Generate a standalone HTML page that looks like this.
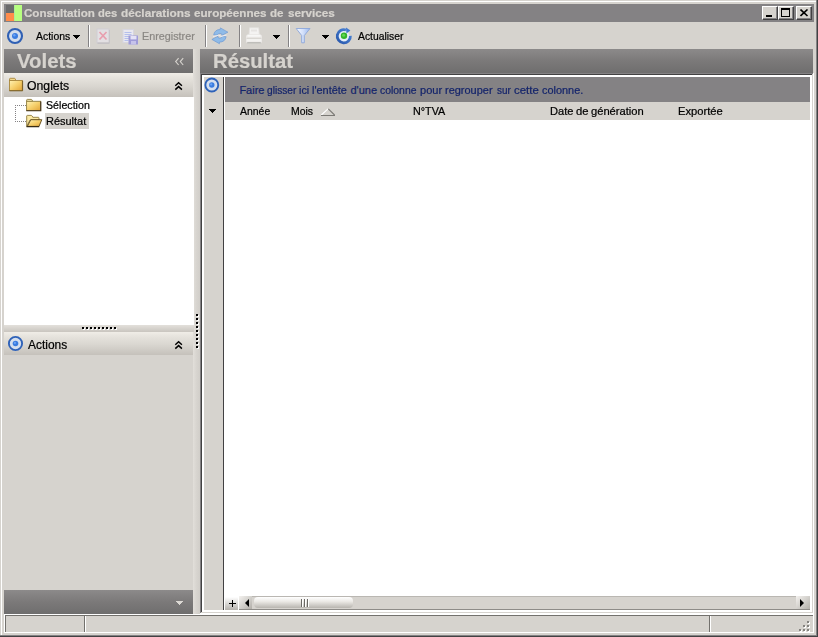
<!DOCTYPE html>
<html>
<head>
<meta charset="utf-8">
<title>Consultation des déclarations européennes de services</title>
<style>
html,body{margin:0;padding:0;}
body{width:818px;height:637px;overflow:hidden;background:#d6d3ce;font-family:"Liberation Sans",sans-serif;font-size:11px;color:#000;position:relative;}
.a{position:absolute;}
.t{position:absolute;white-space:nowrap;line-height:1;transform-origin:0 0;-webkit-text-stroke:0.22px currentColor;}
#win{left:0;top:0;width:818px;height:637px;background:#d6d3ce;}
/* window frame */
#fr1{left:0;top:0;width:817px;height:636px;border-right:1px solid #424142;border-bottom:1px solid #424142;}
#fr2{left:0;top:0;width:816px;height:635px;border-right:1px solid #848284;border-bottom:1px solid #848284;}
#fr3{left:1;top:1px;left:1px;width:814px;height:633px;border-left:1px solid #fff;border-top:1px solid #fff;}
#title{left:4px;top:4px;width:810px;height:18px;background:#848284;}
.cb{position:absolute;top:6px;width:16px;height:14px;background:#d6d3ce;box-sizing:border-box;border:1px solid;border-color:#fff #424142 #424142 #fff;}
.cb i{position:absolute;left:0;top:0;width:13px;height:11px;border-right:1px solid #848284;border-bottom:1px solid #848284;}
.sep{position:absolute;top:25px;width:1px;height:22px;background:#848284;border-right:1px solid #fff;}
.hdr{background:linear-gradient(#8c8a8a 0%,#7b7979 50%,#6f6e6e 100%);}
.grp{background:linear-gradient(#f0ede7 0%,#e6e3dd 20%,#d9d6d0 55%,#c5c1bb 100%);}
.tri{position:absolute;width:7px;height:4px;--c:#000;background:linear-gradient(var(--c),var(--c)) 0 0/7px 1px no-repeat,linear-gradient(var(--c),var(--c)) 1px 1px/5px 1px no-repeat,linear-gradient(var(--c),var(--c)) 2px 2px/3px 1px no-repeat,linear-gradient(var(--c),var(--c)) 3px 3px/1px 1px no-repeat;}
</style>
</head>
<body>
<div id="win" class="a">
  <div id="fr1" class="a"></div><div id="fr2" class="a"></div><div id="fr3" class="a"></div>

  <!-- title bar -->
  <div id="title" class="a"></div>
  <div class="a" style="left:6px;top:5px;width:8px;height:8px;background:#6b6b6b"></div>
  <div class="a" style="left:6px;top:13px;width:8px;height:8px;background:#ff8c4a"></div>
  <div class="a" style="left:14px;top:5px;width:8px;height:16px;background:linear-gradient(90deg,#a8e8a0 0,#b8ff80 1.5px)"></div>
    <div class="t" id="ttl" style="left:23.57px;top:8px;transform:scaleX(1.053);font-weight:bold;color:#d6d3ce;">Consultation</div><div class="t" style="left:97.69px;top:8px;transform:scaleX(1.0167);font-weight:bold;color:#d6d3ce;">des</div><div class="t" style="left:120.56px;top:8px;transform:scaleX(1.0734);font-weight:bold;color:#d6d3ce;">déclarations</div><div class="t" style="left:193.97px;top:8px;transform:scaleX(1.0593);font-weight:bold;color:#d6d3ce;">européennes</div><div class="t" style="left:270.48px;top:8px;transform:scaleX(1.05);font-weight:bold;color:#d6d3ce;">de</div><div class="t" style="left:287.77px;top:8px;transform:scaleX(1.0636);font-weight:bold;color:#d6d3ce;">services</div>
  <div class="cb" style="left:762px"><i></i><b class="a" style="left:3px;top:8px;width:6px;height:2px;background:#000"></b></div>
  <div class="cb" style="left:778px"><i></i><b class="a" style="left:2px;top:1px;width:7px;height:6px;border:1px solid #000;border-top-width:2px"></b></div>
  <div class="cb" style="left:796px"><i></i>
    <svg class="a" style="left:3px;top:2px" width="9" height="8" viewBox="0 0 9 8"><path d="M0.5 0.5 L7.5 7 M7.5 0.5 L0.5 7" stroke="#000" stroke-width="1.6" fill="none"/></svg>
  </div>

  <!-- toolbar -->
  <svg class="a" style="left:6px;top:27px" width="18" height="18" viewBox="0 0 18 18">
    <circle cx="9" cy="9" r="7.3" fill="#d3ddec"/>
    <circle cx="9" cy="9" r="7.0" fill="none" stroke="#2f60b4" stroke-width="2.1"/>
    <circle cx="9" cy="9" r="3" fill="#3a7ce0"/>
    <circle cx="8.3" cy="8.3" r="1.2" fill="#6aa3f5"/>
  </svg>
  <div class="t" id="tact" style="transform:scaleX(0.948);left:36px;top:31px;">Actions</div>
  <div class="tri" style="left:73px;top:35px;"></div>
  <div class="sep" style="left:88px"></div>
  <!-- delete icon (disabled) -->
  <svg class="a" style="left:95px;top:27px;filter:blur(0.35px)" width="17" height="18" viewBox="0 0 17 18">
    <rect x="2" y="2" width="12" height="14" fill="#e3e0e3" stroke="#d0ced3" stroke-width="1"/>
    <rect x="2.5" y="15.5" width="12" height="1.2" fill="#bfbdc0"/>
    <rect x="14" y="3" width="1" height="13" fill="#c8c6c9"/>
    <path d="M4.5 5 L11.5 12.5 M11.5 5 L4.5 12.5" stroke="#e89eae" stroke-width="1.7" fill="none"/>
  </svg>
  <!-- save icon (disabled) -->
  <svg class="a" style="left:122px;top:28px;filter:blur(0.3px)" width="17" height="17" viewBox="0 0 17 17">
    <rect x="1" y="1.5" width="10.5" height="13" fill="#e9e8ef" stroke="#d6d5e0"/>
    <path d="M2.5 4.5h7M2.5 6.5h7M2.5 8.5h7M2.5 10.5h5M2.5 12.5h4" stroke="#b4bfec" stroke-width="1"/>
    <rect x="6.5" y="7.5" width="9.5" height="9" fill="#9f9bd8"/>
    <rect x="8.5" y="8" width="6" height="3.4" fill="#e4e2f6"/>
    <rect x="9" y="13" width="5" height="3.5" fill="#c6c3ea"/>
  </svg>
  <div class="t" id="tenr" style="transform:scaleX(0.98);left:141.6px;top:31px;color:#8a8783;">Enregistrer</div>
  <div class="sep" style="left:205px"></div>
  <!-- refresh arrows (disabled) -->
  <svg class="a" style="left:211px;top:27px;filter:blur(0.3px)" width="18" height="18" viewBox="0 0 18 18">
    <g id="rfa"><path d="M2.7 7.9 C3.2 4.4 5.8 2.4 9.2 2.5 L9.4 0.9 L16.9 5.2 L10.9 8.3 L10.4 6.6 C8.3 6.2 6.9 6.8 6.2 8.1 Z" fill="#8fbbe8" stroke="#6f99d2" stroke-width="0.7"/></g>
    <use href="#rfa" transform="rotate(180 8.9 8.8)"/>
    <path d="M2.2 9.6 L7.6 8.2 L10.2 9.4 L15.6 8" stroke="#e9ecf4" stroke-width="1.0" fill="none"/>
  </svg>
  <div class="sep" style="left:239px"></div>
  <!-- printer (disabled) -->
  <svg class="a" style="left:245px;top:27px;filter:blur(0.3px)" width="18" height="18" viewBox="0 0 18 18">
    <path d="M4.5 0.8 L13.8 0.8 L14.3 8 L4 8 Z" fill="#f4f3f2" stroke="#e2e0dd" stroke-width="0.8"/>
    <rect x="6" y="2.5" width="6" height="2" fill="#e6e4e2"/>
    <path d="M1 10 Q1 7.2 3.5 7.2 L14.5 7.2 Q17 7.2 17 10 L17 14.5 Q17 16.3 15 16.3 L3 16.3 Q1 16.3 1 14.5 Z" fill="#ebe9e7"/>
    <rect x="2.5" y="8.2" width="13" height="1.4" fill="#fbfaf9"/>
    <rect x="1.5" y="10.8" width="15" height="1.2" fill="#d9d7d3"/>
    <rect x="2" y="12" width="14" height="2.5" fill="#f3f2f0"/>
    <rect x="2.2" y="15.2" width="13.6" height="1.2" fill="#b5b3af"/>
  </svg>
  <div class="tri" style="left:273px;top:35px;"></div>
  <div class="sep" style="left:288px"></div>
  <!-- funnel -->
  <svg class="a" style="left:295px;top:27px;filter:blur(0.25px)" width="17" height="18" viewBox="0 0 17 18">
    <defs><linearGradient id="fg" x1="0" x2="1" y1="0" y2="0"><stop offset="0" stop-color="#f7f9ff"/><stop offset="0.5" stop-color="#d3e0fa"/><stop offset="1" stop-color="#9cb9ee"/></linearGradient></defs>
    <path d="M1.2 1.5 L15 1.5 L9.3 8.5 L9.3 15.8 L6.7 15.8 L6.7 8.5 Z" fill="url(#fg)" stroke="#8ba6da" stroke-width="0.9"/>
  </svg>
  <div class="tri" style="left:322px;top:35px;"></div>
  <!-- actualiser icon -->
  <svg class="a" style="left:335px;top:27px;filter:blur(0.3px)" width="18" height="18" viewBox="0 0 18 18">
    <defs><linearGradient id="ag" x1="0" x2="1" y1="1" y2="0"><stop offset="0" stop-color="#2a58ac"/><stop offset="1" stop-color="#4a84d8"/></linearGradient></defs>
    <circle cx="8.8" cy="9.2" r="5.6" fill="#e4eef9"/>
    <path d="M11.0 3.0 A6.6 6.6 0 1 0 15.4 8.8" fill="none" stroke="url(#ag)" stroke-width="2.8"/>
    <path d="M11 0.6 L15.4 3.4 L11.4 6.4 Z" fill="#3f78cf"/>
    <circle cx="9" cy="8.8" r="3.2" fill="#33b52a"/>
    <circle cx="8.6" cy="8.2" r="1.5" fill="#62d654"/>
  </svg>
  <div class="t" id="tactu" style="transform:scaleX(0.94);left:358px;top:31px;">Actualiser</div>

  <!-- left panel -->
  <div class="a" style="left:193px;top:49px;width:7px;height:565px;background:linear-gradient(90deg,#e2dfda,#d8d5d0 45%,#d1cec9);"></div>
  <div class="a hdr" style="left:4px;top:49px;width:189px;height:24px;"></div>
  <div class="t" id="tvol" style="transform:scaleX(1.04);left:17px;top:52px;font-weight:bold;font-size:19.6px;color:#d6d3ce;">Volets</div>
  <svg class="a" style="left:174px;top:57px" width="11" height="9" viewBox="0 0 11 9"><path d="M4.6 1.2 L1.7 4.6 L4.6 8 M9.2 1.2 L6.3 4.6 L9.2 8" stroke="#d6d3ce" stroke-width="1.15" fill="none"/></svg>

  <div class="a grp" style="left:4px;top:73px;width:189px;height:24px;"></div>
  <!-- folder icon onglets -->
  <svg class="a" style="left:9px;top:77px" width="15" height="15" viewBox="0 0 15 15">
    <defs><linearGradient id="fo" x1="0" x2="1" y1="0" y2="1"><stop offset="0" stop-color="#fff2b4"/><stop offset="0.5" stop-color="#f6d06c"/><stop offset="1" stop-color="#e2a336"/></linearGradient></defs>
    <path d="M0.6 3.6 L0.6 2 Q0.6 1.3 1.3 1.3 L5.4 1.3 Q6 1.3 6.3 2 L6.8 3.6 Z" fill="#f3d98c" stroke="#a8873c" stroke-width="0.9"/>
    <rect x="0.5" y="3.5" width="12.8" height="10" fill="url(#fo)" stroke="#a8873c" stroke-width="0.9"/>
    <path d="M0.4 13.8 H13.6 V3.8" stroke="#7a5e26" stroke-width="1" fill="none"/>
  </svg>
  <div class="t" id="tong" style="transform:scaleX(1.02);left:27px;top:80px;font-size:12px;">Onglets</div>
  <svg class="a chev" style="left:174px;top:81px" width="9" height="10" viewBox="0 0 9 10"><path d="M1.3 4.8 L4.6 1.8 L7.9 4.8 M1.3 8.6 L4.6 5.6 L7.9 8.6" stroke="#000" stroke-width="1.45" fill="none"/></svg>

  <div class="a" style="left:4px;top:97px;width:190px;height:228px;background:#fff;"></div>
  <!-- tree lines -->
  <div class="a" style="left:15px;top:105px;width:1px;height:17px;background:repeating-linear-gradient(#848284 0 1px,#fff 1px 2px);"></div>
  <div class="a" style="left:15px;top:105px;width:11px;height:1px;background:repeating-linear-gradient(90deg,#848284 0 1px,#fff 1px 2px);"></div>
  <div class="a" style="left:15px;top:121px;width:11px;height:1px;background:repeating-linear-gradient(90deg,#848284 0 1px,#fff 1px 2px);"></div>
  <!-- folder closed -->
  <svg class="a" style="left:26px;top:98px" width="16" height="14" viewBox="0 0 16 14">
    <path d="M0.7 3.4 L0.7 2 Q0.7 1.4 1.4 1.4 L5.2 1.4 Q5.8 1.4 6.1 2 L6.6 3.4 Z" fill="#fff4c4" stroke="#8f7c3c" stroke-width="0.9"/>
    <rect x="0.6" y="3.3" width="14" height="9.2" fill="url(#fo)" stroke="#8f7c3c" stroke-width="0.9"/>
    <path d="M0.3 12.7 H14.8 V3.6" stroke="#43331a" stroke-width="1.1" fill="none"/>
  </svg>
  <div class="t" id="tsel" style="transform:scaleX(0.968);left:46px;top:100px;">Sélection</div>
  <!-- selected -->
  <div class="a" style="left:45px;top:113px;width:44px;height:16px;background:#d6d3ce;"></div>
  <svg class="a" style="left:26px;top:114px" width="17" height="14" viewBox="0 0 17 14">
    <path d="M0.7 12.4 L0.7 2 Q0.7 1.4 1.4 1.4 L5 1.4 Q5.8 1.4 6.2 2 L6.8 3.3 L12.3 3.3 Q13 3.3 13 4 L13 6 L4 6 Z" fill="#fbe9a4" stroke="#8f7c3c" stroke-width="0.9"/>
    <path d="M4.8 5.7 L15.8 5.7 L13 12.4 L1.3 12.4 Z" fill="url(#fo)" stroke="#5e4819" stroke-width="0.9"/>
    <path d="M0.5 12.7 H13.2" stroke="#2e220e" stroke-width="1.1" fill="none"/>
  </svg>
  <div class="t" id="tres" style="transform:scaleX(0.997);left:46px;top:116px;">Résultat</div>

  <!-- horizontal splitter -->
  <div class="a" style="left:4px;top:325px;width:190px;height:7px;background:linear-gradient(#e3e0db,#c9c5bf);"></div>
  <div class="a" id="hdots" style="left:82px;top:327px;width:36px;height:3px;background:repeating-linear-gradient(90deg,#000 0 2px,transparent 2px 4px) 0 0/35px 2px no-repeat,repeating-linear-gradient(90deg,#fff 0 2px,transparent 2px 4px) 1px 1px/35px 2px no-repeat;"></div>
  <div class="a grp" style="left:4px;top:332px;width:189px;height:23px;"></div>
  <svg class="a" style="left:7px;top:335px" width="17" height="17" viewBox="0 0 17 17">
    <circle cx="8.5" cy="8.5" r="7" fill="#d5dfee"/>
    <circle cx="8.5" cy="8.5" r="6.6" fill="none" stroke="#2f62b8" stroke-width="1.9"/>
    <circle cx="8.5" cy="8.5" r="2.8" fill="#3a7ce0"/>
    <circle cx="7.9" cy="7.9" r="1.1" fill="#6aa3f5"/>
  </svg>
  <div class="t" id="tact2" style="transform:scaleX(0.995);left:28px;top:339px;font-size:12px;">Actions</div>
  <svg class="a chev" style="left:174px;top:340px" width="9" height="10" viewBox="0 0 9 10"><path d="M1.3 4.8 L4.6 1.8 L7.9 4.8 M1.3 8.6 L4.6 5.6 L7.9 8.6" stroke="#000" stroke-width="1.45" fill="none"/></svg>

  <!-- overflow bar -->
  <div class="a hdr" style="left:4px;top:590px;width:189px;height:24px;"></div>
  <div class="tri" style="left:176px;top:601px;--c:#dbd8d3;"></div>

  
  <!-- vertical splitter dots -->
  <div class="a" id="vdots" style="left:196px;top:314px;width:3px;height:36px;background:repeating-linear-gradient(180deg,#000 0 2px,transparent 2px 4px) 0 0/2px 35px no-repeat,repeating-linear-gradient(180deg,#fff 0 2px,transparent 2px 4px) 1px 1px/2px 35px no-repeat;"></div>

  <!-- right panel -->
  <div class="a hdr" style="left:200px;top:49px;width:613px;height:24px;"></div>
  <div class="t" id="tresh" style="transform:scaleX(1.035);left:213px;top:52px;font-weight:bold;font-size:19.6px;color:#d6d3ce;">Résultat</div>

  <!-- grid sunken border -->
  <div class="a" style="left:200px;top:73px;width:614px;height:541px;background:#fff;"></div>
  <div class="a" style="left:200px;top:73px;width:613px;height:1px;background:#848284;"></div>
  <div class="a" style="left:200px;top:73px;width:1px;height:540px;background:#848284;"></div>
  <div class="a" style="left:201px;top:74px;width:611px;height:1px;background:#424142;"></div>
  <div class="a" style="left:201px;top:74px;width:1px;height:538px;background:#424142;"></div>
  <div class="a" style="left:201px;top:612px;width:612px;height:1px;background:#d6d3ce;"></div>
  <div class="a" style="left:812px;top:74px;width:1px;height:539px;background:#d6d3ce;"></div>
  <!-- indicator column -->
  <div class="a" style="left:204px;top:77px;width:19px;height:533px;background:#d6d3ce;"></div>
  <div class="a" style="left:223px;top:77px;width:1px;height:533px;background:#424142;"></div>
  <svg class="a" style="left:203px;top:76px" width="18" height="18" viewBox="0 0 18 18">
    <circle cx="8.8" cy="9" r="7.3" fill="#d5dfee"/>
    <circle cx="8.8" cy="9" r="6.45" fill="none" stroke="#2f62b8" stroke-width="1.9"/>
    <circle cx="8.8" cy="9" r="2.7" fill="#3a7ce0"/>
    <circle cx="8.2" cy="8.4" r="1.1" fill="#6aa3f5"/>
  </svg>
  <div class="tri" style="left:209px;top:109px;"></div>
  <!-- group panel -->
  <div class="a" style="left:225px;top:77px;width:585px;height:25px;background:#848284;"></div>
  <div class="t" id="tgrp" style="left:239.4px;top:85px;transform:scaleX(1.0);color:#14246b;">Faire</div><div class="t" style="left:266.74px;top:85px;transform:scaleX(0.9248);color:#14246b;">glisser</div><div class="t" style="left:299.37px;top:85px;transform:scaleX(0.9778);color:#14246b;">ici</div><div class="t" style="left:311.95px;top:85px;transform:scaleX(0.9941);color:#14246b;">l'entête</div><div class="t" style="left:350.5px;top:85px;transform:scaleX(1.0);color:#14246b;">d'une</div><div class="t" style="left:380.43px;top:85px;transform:scaleX(0.9467);color:#14246b;">colonne</div><div class="t" style="left:420.05px;top:85px;transform:scaleX(1.0024);color:#14246b;">pour</div><div class="t" style="left:445.45px;top:85px;transform:scaleX(0.9968);color:#14246b;">regrouper</div><div class="t" style="left:496.65px;top:85px;transform:scaleX(0.9017);color:#14246b;">sur</div><div class="t" style="left:514.18px;top:85px;transform:scaleX(1.0391);color:#14246b;">cette</div><div class="t" style="left:542.2px;top:85px;transform:scaleX(0.9913);color:#14246b;">colonne.</div>
  <!-- column headers -->
  <div class="a" style="left:225px;top:102px;width:585px;height:18px;background:#d6d3ce;"></div>
  <div class="t" id="c1" style="transform:scaleX(0.95);left:240px;top:106px;">Année</div>
  <div class="t" id="c2" style="transform:scaleX(0.95);left:290.5px;top:106px;">Mois</div>
  <svg class="a" style="left:320px;top:108px" width="16" height="9" viewBox="0 0 16 9">
    <path d="M1.3 7 L8 0.8" stroke="#fff" stroke-width="1.1" fill="none"/>
    <path d="M8.3 0.8 L14.6 7" stroke="#7b7975" stroke-width="1.1" fill="none"/>
    <path d="M1 7.5 L15 7.5" stroke="#7b7975" stroke-width="1" fill="none"/>
  </svg>
  <div class="t" id="c3" style="transform:scaleX(0.98);left:413px;top:106px;">N°TVA</div>
  <div class="t" id="c4" style="left:549.79px;top:106px;transform:scaleX(1.0069);">Date</div><div class="t" style="left:575.99px;top:106px;transform:scaleX(1.0222);">de</div><div class="t" style="left:591.29px;top:106px;transform:scaleX(1.0148);">génération</div>
  <div class="t" id="c5" style="transform:scaleX(1.018);left:678px;top:106px;">Exportée</div>

  <!-- bottom scrollbar -->
  <div class="a" style="left:225px;top:597px;width:13px;height:13px;background:linear-gradient(#fff,#b5b2ad);"></div>
  <div class="a" style="left:229px;top:603px;width:7px;height:1px;background:#000;"></div>
  <div class="a" style="left:232px;top:600px;width:1px;height:7px;background:#000;"></div>
  <div class="a" style="left:239px;top:596px;width:571px;height:14px;background:#d6d3ce;"></div>
  <div class="a" style="left:239px;top:596px;width:571px;height:1px;background:#bab7b2;"></div>
  <div class="a" style="left:239px;top:609px;width:571px;height:1px;background:#8e8c88;"></div>
  <div class="a" style="left:239px;top:596px;width:13px;height:13px;background:linear-gradient(135deg,#f4f2ef,#b2afa9);"></div>
  <div class="a" style="left:245px;top:599px;width:0;height:0;border-top:4px solid transparent;border-bottom:4px solid transparent;border-right:4px solid #000;"></div>
  <div class="a" style="left:254px;top:597px;width:99px;height:11px;border-radius:4px;background:linear-gradient(#fff,#eceae6 40%,#b8b5af);"></div>
  <div class="a" style="left:301px;top:599px;width:8px;height:8px;background:repeating-linear-gradient(90deg,#6b6965 0 1px,#fff 1px 2px,transparent 2px 3px);"></div>
  <div class="a" style="left:796px;top:596px;width:14px;height:13px;background:linear-gradient(135deg,#f4f2ef,#b2afa9);"></div>
  <div class="a" style="left:800px;top:599px;width:0;height:0;border-top:4px solid transparent;border-bottom:4px solid transparent;border-left:4px solid #000;"></div>

  <!-- status bar -->
  <div class="a" style="left:4px;top:614px;width:810px;height:19px;box-sizing:border-box;border:1px solid #fff;background:#d6d3ce;"></div>
  <div class="a" style="left:5px;top:615px;width:808px;height:1px;background:#73716d;"></div>
  <div class="a" style="left:5px;top:615px;width:1px;height:17px;background:#73716d;"></div>
  <div class="a" style="left:84px;top:616px;width:1px;height:16px;background:#73716d;border-right:1px solid #fff;"></div>
  <div class="a" style="left:709px;top:616px;width:1px;height:16px;background:#73716d;border-right:1px solid #fff;"></div>
  <!-- grip -->
  <div class="a" style="left:808px;top:622px;width:2px;height:2px;background:#fff;"></div>
  <div class="a" style="left:804px;top:626px;width:2px;height:2px;background:#fff;"></div>
  <div class="a" style="left:808px;top:626px;width:2px;height:2px;background:#fff;"></div>
  <div class="a" style="left:800px;top:630px;width:2px;height:2px;background:#fff;"></div>
  <div class="a" style="left:804px;top:630px;width:2px;height:2px;background:#fff;"></div>
  <div class="a" style="left:808px;top:630px;width:2px;height:2px;background:#fff;"></div>
  <div class="a" style="left:807px;top:621px;width:2px;height:2px;background:#84827e;"></div>
  <div class="a" style="left:803px;top:625px;width:2px;height:2px;background:#84827e;"></div>
  <div class="a" style="left:807px;top:625px;width:2px;height:2px;background:#84827e;"></div>
  <div class="a" style="left:799px;top:629px;width:2px;height:2px;background:#84827e;"></div>
  <div class="a" style="left:803px;top:629px;width:2px;height:2px;background:#84827e;"></div>
  <div class="a" style="left:807px;top:629px;width:2px;height:2px;background:#84827e;"></div>
</div>
</body>
</html>
